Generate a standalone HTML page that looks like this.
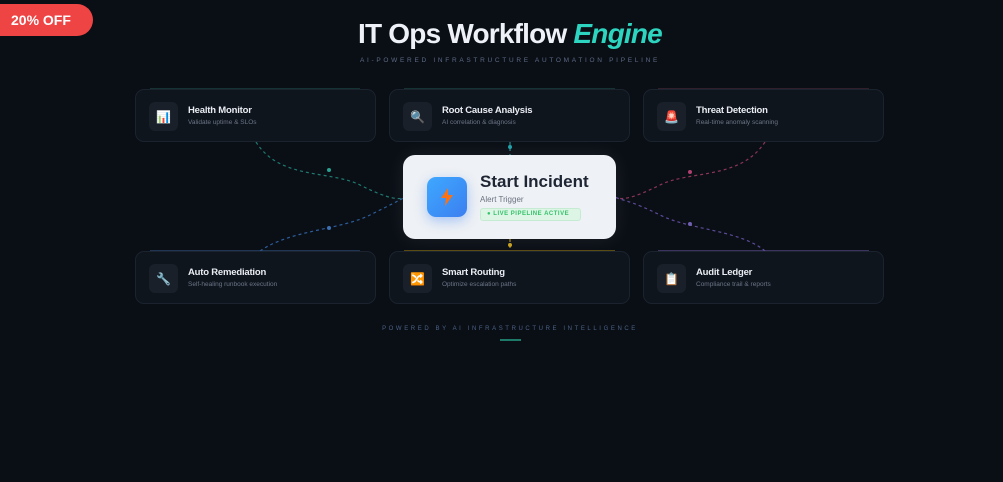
<!DOCTYPE html>
<html><head><meta charset="utf-8"><style>
*{margin:0;padding:0;box-sizing:border-box}
body{width:1003px;height:482px;background:#0a0e15;font-family:"Liberation Sans",sans-serif;position:relative;overflow:hidden;color:#e8edf5}
.badge{position:absolute;left:0;top:4px;width:93px;height:32px;background:#ef4444;border-radius:0 16px 16px 0;color:#fff;font-weight:bold;font-size:14px;line-height:32px;padding-left:11px}
h1{position:absolute;top:18px;left:0;width:1020px;text-align:center;font-size:28px;font-weight:bold;color:#eef2f8;letter-spacing:-0.8px}
h1 i{color:#2dd4bf}
.sub{position:absolute;top:57px;width:1020px;text-align:center;font-size:6.5px;letter-spacing:2.7px;color:#5d6b85}
.card{position:absolute;width:241px;height:53px;background:#0f151d;border:1px solid #1b232e;border-radius:9px}
.ic{position:absolute;left:13px;top:12px;width:29px;height:29px;background:#1a2029;border-radius:6px;display:flex;align-items:center;justify-content:center;font-size:12px}
.t{position:absolute;left:52px;top:15px;font-size:9.5px;font-weight:bold;color:#e9edf3;letter-spacing:-0.2px}
.d{position:absolute;left:52px;top:29px;font-size:6.5px;color:#6b7588}
.center{position:absolute;left:403px;top:155px;width:213px;height:84px;background:#eef1f5;border-radius:12px;box-shadow:0 0 20px rgba(255,255,255,.08)}
.bolt{position:absolute;left:24px;top:22px;width:40px;height:40px;border-radius:9px;background:linear-gradient(135deg,#3ea8ff,#3b7ff0);display:flex;align-items:center;justify-content:center;box-shadow:0 4px 12px rgba(59,130,246,.4)}
.foot{position:absolute;top:326px;width:1020px;text-align:center;font-size:6px;letter-spacing:2.6px;color:#4b6287}
</style></head><body>
<svg width="1003" height="482" style="position:absolute;left:0;top:0" fill="none" stroke-width="1.2" stroke-dasharray="3 3">
<path d="M256 142 C280 180 330 170 360 185 S400 200 405 197" stroke="#1f7a70"/>
<path d="M260 251 C290 230 340 230 370 215 S400 200 405 197" stroke="#2d5d9a"/>
<path d="M765 142 C740 180 690 170 660 185 S620 200 615 197" stroke="#8a3556"/>
<path d="M765 251 C740 230 690 230 660 215 S620 200 615 197" stroke="#5c4a99"/>
<path d="M510 142 L510 155" stroke="#1f8a90"/>
<path d="M510 239 L510 251" stroke="#a08420"/>
<circle cx="329" cy="170" r="2" fill="#2aa090" stroke="none"/><circle cx="329" cy="228" r="2" fill="#3a70b0" stroke="none"/>
<circle cx="690" cy="172" r="2" fill="#b04070" stroke="none"/><circle cx="690" cy="224" r="2" fill="#7060b0" stroke="none"/>
<circle cx="510" cy="147" r="2" fill="#20a0a8" stroke="none"/><circle cx="510" cy="245" r="2" fill="#c8a020" stroke="none"/>
<line x1="150" y1="89" x2="360" y2="89" stroke="#1d4a48" stroke-dasharray="0"/>
<line x1="404" y1="89" x2="615" y2="89" stroke="#1d4a48" stroke-dasharray="0"/>
<line x1="658" y1="89" x2="869" y2="89" stroke="#4a2a3a" stroke-dasharray="0"/>
<line x1="150" y1="251" x2="360" y2="251" stroke="#2d4d7a" stroke-dasharray="0"/>
<line x1="404" y1="251" x2="615" y2="251" stroke="#8a7010" stroke-dasharray="0"/>
<line x1="658" y1="251" x2="869" y2="251" stroke="#5a4a8a" stroke-dasharray="0"/>
<line x1="500" y1="340" x2="521" y2="340" stroke="#1d7a68" stroke-width="2" stroke-dasharray="0"/>
</svg>
<div class="badge">20% OFF</div>
<h1>IT Ops Workflow <i>Engine</i></h1>
<div class="sub">AI-POWERED INFRASTRUCTURE AUTOMATION PIPELINE</div>
<div class="card" style="left:135px;top:89px"><div class="ic">📊</div><div class="t">Health Monitor</div><div class="d">Validate uptime &amp; SLOs</div></div>
<div class="card" style="left:389px;top:89px"><div class="ic">🔍</div><div class="t">Root Cause Analysis</div><div class="d">AI correlation &amp; diagnosis</div></div>
<div class="card" style="left:643px;top:89px"><div class="ic">🚨</div><div class="t">Threat Detection</div><div class="d">Real-time anomaly scanning</div></div>
<div class="card" style="left:135px;top:251px"><div class="ic">🔧</div><div class="t">Auto Remediation</div><div class="d">Self-healing runbook execution</div></div>
<div class="card" style="left:389px;top:251px"><div class="ic">🔀</div><div class="t">Smart Routing</div><div class="d">Optimize escalation paths</div></div>
<div class="card" style="left:643px;top:251px"><div class="ic">📋</div><div class="t">Audit Ledger</div><div class="d">Compliance trail &amp; reports</div></div>
<div class="center">
<div class="bolt"><svg width="14" height="18" viewBox="0 0 14 18"><path d="M8 0 L1 10 H6 L5 18 L13 7 H8 Z" fill="#f97316"/></svg></div>
<div style="position:absolute;left:77px;top:17px;font-size:17px;font-weight:bold;color:#1e2533">Start Incident</div>
<div style="position:absolute;left:77px;top:40px;font-size:8px;color:#6b7280">Alert Trigger</div>
<div style="position:absolute;left:77px;top:53px;width:101px;height:13px;background:#dcf5e4;border:1px solid #c5ecd2;border-radius:3px;font-size:6px;font-weight:bold;color:#34c36a;line-height:11px;padding-left:6px;letter-spacing:.5px">● LIVE PIPELINE ACTIVE</div>
</div>
<div class="foot">POWERED BY AI INFRASTRUCTURE INTELLIGENCE</div>
</body></html>
